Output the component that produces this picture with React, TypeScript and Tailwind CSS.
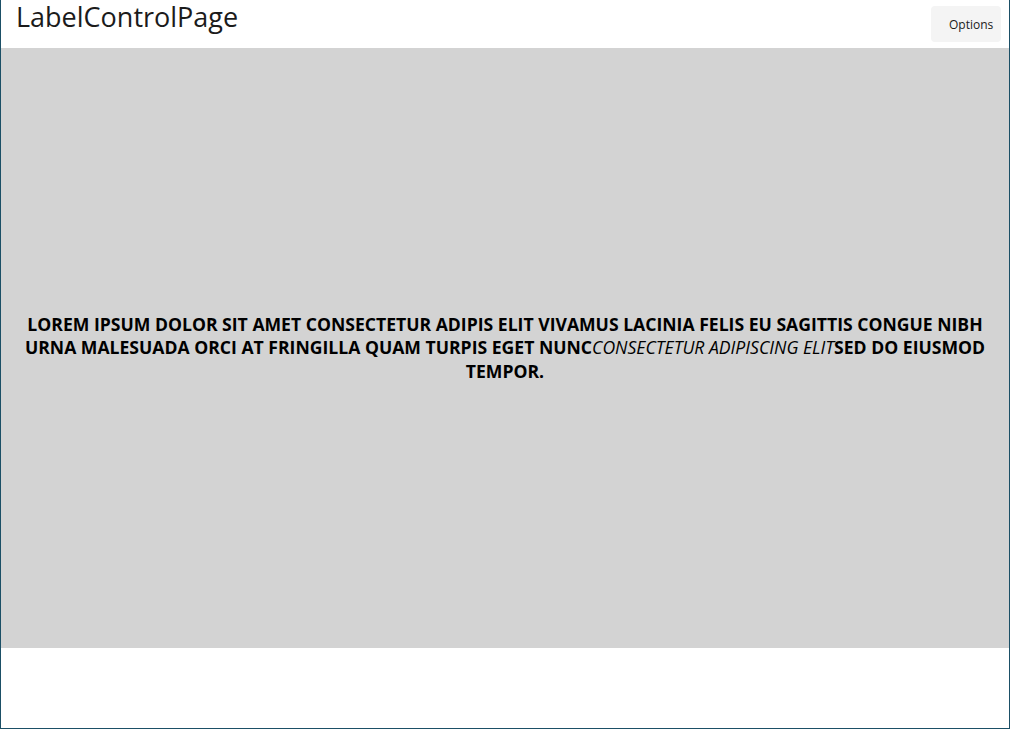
export default function App() {
  return (
    <div className="flex h-[729px] w-[1010px] flex-col border-b border-l border-r border-[#1b4f66] bg-white font-['Open_Sans',sans-serif] text-black">
      <header className="flex h-[48px] items-start justify-between pl-[15px] pr-[8px]">
        <h1 className="text-[27px] leading-[34px] text-[#1b1b1b]">LabelControlPage</h1>
        <button
          type="button"
          className="mt-[6px] h-[36px] w-[70px] rounded-[4px] bg-[#f4f4f4] pl-[18px] pt-[2px] text-left text-[12px] text-[#1b1b1b]"
        >
          Options
        </button>
      </header>

      <div className="flex h-[600px] items-center justify-center bg-[#d3d3d3] px-[14px]">
        <p className="text-center text-[17.6px] font-bold uppercase leading-[23.5px]">
          Lorem ipsum dolor sit amet consectetur adipis elit vivamus lacinia felis eu sagittis congue nibh urna malesuada
          orci at fringilla quam turpis eget nunc
          <span className="font-normal italic">consectetur adipiscing elit</span>
          sed do eiusmod tempor.
        </p>
      </div>

      <div className="flex-1" />
    </div>
  );
}
